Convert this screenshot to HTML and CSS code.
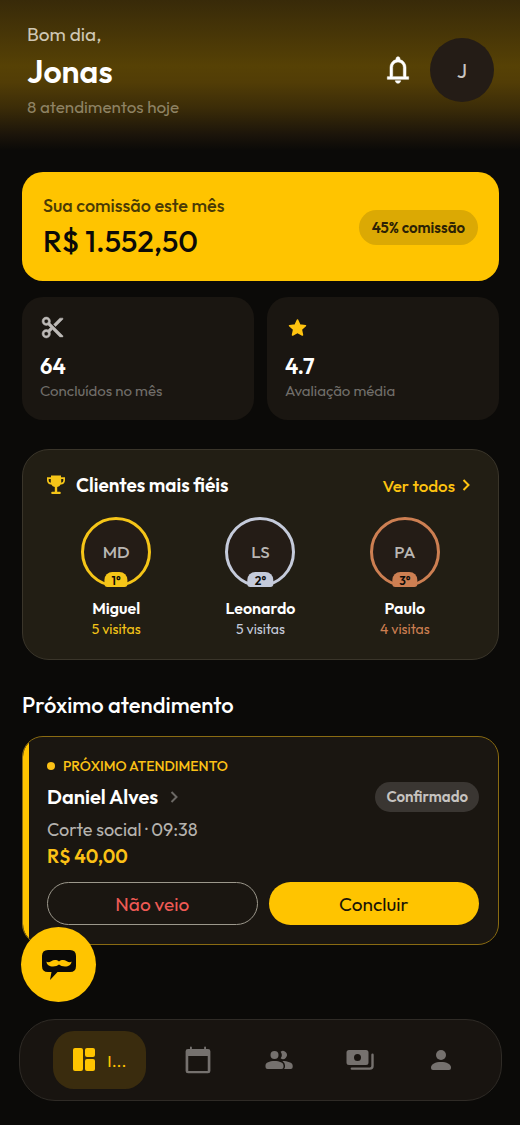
FILE: index.html
```html
<!DOCTYPE html>
<html lang="pt-BR">
<head>
<meta charset="utf-8">
<meta name="viewport" content="width=device-width, initial-scale=1">
<title>Início</title>
<link rel="stylesheet" href="styles.css">
</head>
<body>
<div class="page">
  <header class="header">
    <div class="greeting">
      <p class="hello">Bom dia,</p>
      <h1 class="user-name">Jonas</h1>
      <p class="today">8 atendimentos hoje</p>
    </div>
    <button class="bell" type="button" aria-label="Notificações">
      <svg width="32" height="32" viewBox="0 0 24 24" fill="currentColor" stroke="currentColor" stroke-width=".4"><path d="M4 19v-2h2v-7q0-2.075 1.25-3.687T10.5 4.2v-.7q0-.625.438-1.062T12 2t1.063.438T13.5 3.5v.7q2 .5 3.25 2.113T18 10v7h2v2zm8 3q-.825 0-1.412-.587T10 20h4q0 .825-.587 1.413T12 22m-4-5h8v-7q0-1.65-1.175-2.825T12 6T9.175 7.175T8 10z"/></svg>
    </button>
    <button class="profile" type="button">J</button>
  </header>

  <main class="main">
    <section class="commission">
      <div>
        <p class="commission-label">Sua comissão este mês</p>
        <p class="commission-value">R$ 1.552,50</p>
      </div>
      <span class="commission-rate">45% comissão</span>
    </section>

    <section class="stats">
      <div class="stat">
        <svg class="stat-icon" viewBox="0 0 24 24" fill="currentColor" stroke="currentColor" stroke-width=".5"><path d="M9.64 7.64c.23-.5.36-1.05.36-1.64 0-2.21-1.79-4-4-4S2 3.79 2 6s1.79 4 4 4c.59 0 1.14-.13 1.64-.36L10 12l-2.36 2.36C7.14 14.13 6.59 14 6 14c-2.21 0-4 1.79-4 4s1.79 4 4 4 4-1.79 4-4c0-.59-.13-1.14-.36-1.64L12 14l7 7h3v-1L9.640 7.640zM6 8c-1.1 0-2-.89-2-2s.9-2 2-2 2 .89 2 2-.9 2-2 2zm0 12c-1.1 0-2-.89-2-2s.9-2 2-2 2 .89 2 2-.9 2-2 2zM19 3l-6 6 2 2 7-7V3z"/></svg>
        <p class="stat-value">64</p>
        <p class="stat-label">Concluídos no mês</p>
      </div>
      <div class="stat">
        <svg class="stat-icon gold" viewBox="0 0 24 24" fill="currentColor" stroke="currentColor" stroke-width="1.600" stroke-linejoin="round"><path d="M12 4.800l2.200 4.900 5.400.6-4 3.600 1.100 5.300L12 16.500l-4.700 2.700 1.100-5.300-4-3.600 5.400-.6z"/></svg>
        <p class="stat-value">4.7</p>
        <p class="stat-label">Avaliação média</p>
      </div>
    </section>

    <section class="loyal">
      <div class="loyal-head">
        <svg width="20" height="20" viewBox="0 0 20 20" fill="#f5c518"><path d="M5 .5h10v1.700h4v3.300a4 4 0 0 1-4.300 4A5.200 5.200 0 0 1 11.200 12v4.800h2.600q1 0 1 1.100t-1 1.100H6.200q-1 0-1-1.100t1-1.100h2.600V12a5.200 5.200 0 0 1-3.500-2.500A4 4 0 0 1 1 5.500V2.200h4zM2.700 3.900v1.600q0 1.700 2.100 2.300V3.900zm14.600 0h-2.100v3.900q2.100-.6 2.100-2.300z" fill-rule="evenodd"/></svg>
        <h2 class="loyal-title">Clientes mais fiéis</h2>
        <a class="see-all" href="#clientes">Ver todos
          <svg width="8" height="12" viewBox="0 0 8 12" fill="none" stroke="currentColor" stroke-width="2"><path d="M1.500 1L6.500 6l-5 5"/></svg>
        </a>
      </div>
      <ul class="clients">
        <li class="client first">
          <div class="avatar">MD<span class="rank">1°</span></div>
          <p class="client-name">Miguel</p>
          <p class="visits">5 visitas</p>
        </li>
        <li class="client second">
          <div class="avatar">LS<span class="rank">2°</span></div>
          <p class="client-name">Leonardo</p>
          <p class="visits">5 visitas</p>
        </li>
        <li class="client third">
          <div class="avatar">PA<span class="rank">3°</span></div>
          <p class="client-name">Paulo</p>
          <p class="visits">4 visitas</p>
        </li>
      </ul>
    </section>

    <h2 class="section-title">Próximo atendimento</h2>

    <section class="booking">
      <p class="booking-tag"><span class="dot"></span>PRÓXIMO ATENDIMENTO</p>
      <div class="booking-row">
        <a class="booking-name" href="#cliente">Daniel Alves
          <svg width="8" height="12" viewBox="0 0 8 12" fill="none" stroke="#6b6864" stroke-width="2"><path d="M1.500 1L6.500 6l-5 5"/></svg>
        </a>
        <span class="status">Confirmado</span>
      </div>
      <p class="service">Corte social · 09:38</p>
      <p class="price">R$ 40,00</p>
      <div class="actions">
        <button class="btn btn-outline" type="button">Não veio</button>
        <button class="btn btn-solid" type="button">Concluir</button>
      </div>
    </section>
  </main>

  <div class="dock">
    <button class="fab" type="button" aria-label="Assistente">
      <svg width="36" height="32" viewBox="0 0 36 32"><path d="M7 1h22q6 0 6 6v10q0 6-6 6H16.500L9 31l1.500-8H7q-6 0-6-6V7q0-6 6-6z" fill="#0b0a08"/><path d="M5.500 12.500c1 1.200 3 .7 4.700-.3 2.500-1.500 5.500-1.500 7.800.3 2.300-1.800 5.300-1.800 7.800-.3 1.700 1 3.700 1.500 4.700.3-.1 3.500-2.800 5-6.500 5-2.600 0-4.600-.6-6-1.900-1.400 1.300-3.400 1.900-6 1.900-3.700 0-6.400-1.500-6.500-5z" fill="#ffc400"/></svg>
    </button>
    <nav class="nav">
      <a class="nav-item active" href="#inicio" aria-label="Início">
        <svg width="24" height="24" viewBox="0 0 24 24" fill="currentColor"><rect x="1" y="0" width="10" height="23" rx="2"/><rect x="13" y="0" width="10" height="9" rx="2"/><rect x="13" y="11" width="10" height="12" rx="2"/></svg>
        <span>I...</span>
      </a>
      <a class="nav-item" href="#agenda" aria-label="Agenda">
        <svg width="32" height="32" viewBox="0 0 24 24" fill="currentColor"><path d="M4.500 22q-1.800 0-1.800-1.800V5.500q0-1.800 1.800-1.800H6V2.500q0-.6.700-.6t.7.600v1.200h9.200V2.500q0-.6.700-.6t.7.600v1.200h1.500q1.800 0 1.800 1.800v14.700q0 1.800-1.800 1.800zm.2-1.700h14.600V9H4.700z"/></svg>
      </a>
      <a class="nav-item" href="#clientes" aria-label="Clientes">
        <svg width="28" height="20" viewBox="0 0 28 20" fill="currentColor"><circle cx="9.500" cy="5" r="4"/><path d="M15.600 8.300a5.400 5.400 0 0 0 0-6.600 4 4 0 1 1 0 6.600zM.5 17v-1.500c0-3 4-4.500 9-4.500s9 1.500 9 4.500V17q0 2-2 2h-14q-2 0-2-2zM19 19q1-1 1-2.200v-1.500q0-2.500-2.600-4.200c5 .1 10.300 1.400 10.300 4.700V17q0 2-2 2z"/></svg>
      </a>
      <a class="nav-item" href="#pagamentos" aria-label="Pagamentos">
        <svg width="28" height="20" viewBox="0 0 28 20" fill="currentColor"><path d="M3 0h17q2.500 0 2.500 2.500v10q0 2.500-2.500 2.500H3q-2.500 0-2.500-2.500v-10Q.5 0 3 0zm8.500 4a3.500 3.500 0 1 0 0 7 3.500 3.500 0 0 0 0-7z" fill-rule="evenodd"/><path d="M26.500 4.800V16q0 2.600-2.600 2.600H5.800" fill="none" stroke="currentColor" stroke-width="2.400" stroke-linecap="round"/></svg>
      </a>
      <a class="nav-item" href="#perfil" aria-label="Perfil">
        <svg width="20" height="20" viewBox="0 0 20 20" fill="currentColor"><circle cx="10" cy="5" r="5"/><path d="M0 17.500c0-3.500 4.500-5.500 10-5.500s10 2 10 5.500V18q0 2-2 2H2q-2 0-2-2z"/></svg>
      </a>
    </nav>
  </div>
</div>
</body>
</html>
```

FILE: styles.css
```css
* {
  box-sizing: border-box;
  margin: 0;
  padding: 0;
}

body {
  background: #0b0a08;
  color: #fff;
  font-family: Outfit, Lato, "Open Sans", sans-serif;
}

button {
  border: 0;
  font: inherit;
  cursor: pointer;
}

a {
  color: inherit;
  text-decoration: none;
}

svg {
  display: block;
  flex: none;
}

.page {
  display: flex;
  flex-direction: column;
  min-height: 100vh;
}

/* Header */
.header {
  display: flex;
  align-items: center;
  padding: 22px 26px 32px 27px;
  background: linear-gradient(#382a09 0, #564105 44%, #523d06 55%, #3b2c08 72%, #1b140a 90%, #0b0a08 100%);
}

.greeting {
  flex: 1;
}

.hello {
  font-size: 19px;
  line-height: 24px;
  color: #cfc7b4;
}

.user-name {
  font-size: 32px;
  line-height: 50px;
  font-weight: 600;
}

.today {
  font-size: 17px;
  line-height: 22px;
  color: #8e8263;
}

.bell {
  margin-right: 16px;
  background: none;
  color: #fff;
}

.profile {
  width: 64px;
  height: 64px;
  border-radius: 50%;
  background: #241c16;
  color: #c9c6c3;
  font-size: 21px;
}

/* Content */
.main {
  padding: 22px 21px 0 22px;
}

.commission {
  display: flex;
  align-items: center;
  justify-content: space-between;
  padding: 22px 21px 20px;
  border-radius: 21px;
  background: #ffc400;
  color: #0b0a08;
}

.commission-label {
  margin-bottom: 3px;
  font-size: 18px;
  line-height: 24px;
  font-weight: 500;
  color: #4a3a05;
}

.commission-value {
  font-size: 30px;
  line-height: 40px;
  font-weight: 500;
}

.commission-rate {
  padding: 0 13px;
  border-radius: 18px;
  background: #dba904;
  color: #2b2105;
  font-size: 15px;
  line-height: 35px;
  font-weight: 600;
}

.stats {
  display: grid;
  grid-template-columns: 1fr 1fr;
  gap: 13px;
  margin-top: 16px;
}

.stat {
  padding: 18px 18px 19px;
  border-radius: 21px;
  background: #1a1611;
}

.stat-icon {
  width: 25px;
  height: 25px;
  color: #bdbab7;
}

.stat-icon.gold {
  color: #ffc410;
}

.stat-value {
  margin-top: 12px;
  font-size: 22px;
  line-height: 28px;
  font-weight: 600;
}

.stat-label {
  margin-top: 1px;
  font-size: 15px;
  line-height: 20px;
  color: #716e6a;
}

/* Loyal clients */
.loyal {
  margin-top: 29px;
  padding: 21px;
  border: 1px solid #3a352a;
  border-radius: 27px;
  background: #221e14;
}

.loyal-head {
  display: flex;
  align-items: center;
  padding: 0 7px 0 2px;
}

.loyal-title {
  flex: 1;
  margin-left: 10px;
  font-size: 19px;
  line-height: 28px;
  font-weight: 600;
}

.see-all {
  display: flex;
  align-items: center;
  gap: 7px;
  color: #ffc410;
  font-size: 17px;
  font-weight: 500;
}

.clients {
  display: grid;
  grid-template-columns: repeat(3, 1fr);
  margin-top: 18px;
  list-style: none;
  text-align: center;
}

.client {
  display: flex;
  flex-direction: column;
  align-items: center;
  --tone: #f5c518;
}

.client.second {
  --tone: #c5cbdb;
}

.client.third {
  --tone: #cd7f52;
}

.avatar {
  position: relative;
  width: 70px;
  height: 70px;
  border: 3px solid var(--tone);
  border-radius: 50%;
  background: #241c16;
  color: #b9b6b3;
  font-size: 17px;
  line-height: 64px;
  font-weight: 500;
}

.rank {
  position: absolute;
  bottom: -3px;
  left: 50%;
  height: 15px;
  padding: 0 7px;
  border-radius: 8px 8px 3px 3px;
  background: var(--tone);
  color: #0b0a08;
  font-size: 12px;
  line-height: 18px;
  font-weight: 600;
  transform: translateX(-50%);
}

.client-name {
  margin-top: 10px;
  font-size: 16px;
  line-height: 22px;
  font-weight: 600;
}

.visits {
  margin-top: 1px;
  font-size: 14px;
  line-height: 18px;
  color: var(--tone);
}

/* Next booking */
.section-title {
  margin: 31px 0 17px;
  font-size: 22px;
  line-height: 28px;
  font-weight: 500;
}

.booking {
  padding: 19px 19px 19px 24px;
  border: 1px solid #8a6b12;
  border-radius: 21px;
  background: linear-gradient(to right, #ffc400 6px, #1a1611 6px) padding-box;
}

.booking-tag {
  display: flex;
  align-items: center;
  gap: 8px;
  color: #fbc116;
  font-size: 14px;
  line-height: 20px;
  font-weight: 500;
}

.dot {
  width: 8px;
  height: 8px;
  border-radius: 50%;
  background: currentColor;
}

.booking-row {
  display: flex;
  align-items: center;
  justify-content: space-between;
  margin: 6px 0;
}

.booking-name {
  display: flex;
  align-items: center;
  gap: 12px;
  font-size: 20px;
  line-height: 28px;
  font-weight: 600;
}

.status {
  padding: 0 11px;
  border-radius: 15px;
  background: #3a3632;
  color: #c6c3c0;
  font-size: 15px;
  line-height: 30px;
  font-weight: 600;
}

.service {
  font-size: 18px;
  line-height: 24px;
  color: #b5b2ae;
}

.price {
  color: #fbc116;
  font-size: 19px;
  line-height: 28px;
  font-weight: 600;
}

.actions {
  display: grid;
  grid-template-columns: 1fr 1fr;
  gap: 11px;
  margin-top: 12px;
}

.btn {
  height: 43px;
  border-radius: 22px;
  font-size: 19px;
}

.btn-outline {
  border: 1px solid #9c988c;
  background: none;
  color: #ee5a55;
}

.btn-solid {
  background: #ffc400;
  color: #1a1406;
}

/* Bottom navigation */
.dock {
  position: sticky;
  bottom: 24px;
  margin: auto 18px 24px 19px;
}

.fab {
  position: absolute;
  bottom: calc(100% + 17px);
  left: 2px;
  display: grid;
  place-items: center;
  width: 75px;
  height: 75px;
  border-radius: 50%;
  background: #ffc400;
}

.nav {
  display: flex;
  align-items: center;
  height: 82px;
  padding: 0 20px;
  border: 1px solid #2f2b26;
  border-radius: 36px;
  background: #181410;
}

.nav-item {
  display: flex;
  flex: 81;
  align-items: center;
  justify-content: center;
  color: #75716e;
}

.nav-item.active {
  flex: 93;
  gap: 11px;
  height: 58px;
  margin: 0 12px 0 13px;
  border-radius: 21px;
  background: #3a2c0e;
  color: #ffc400;
  font-size: 17px;
}
```
